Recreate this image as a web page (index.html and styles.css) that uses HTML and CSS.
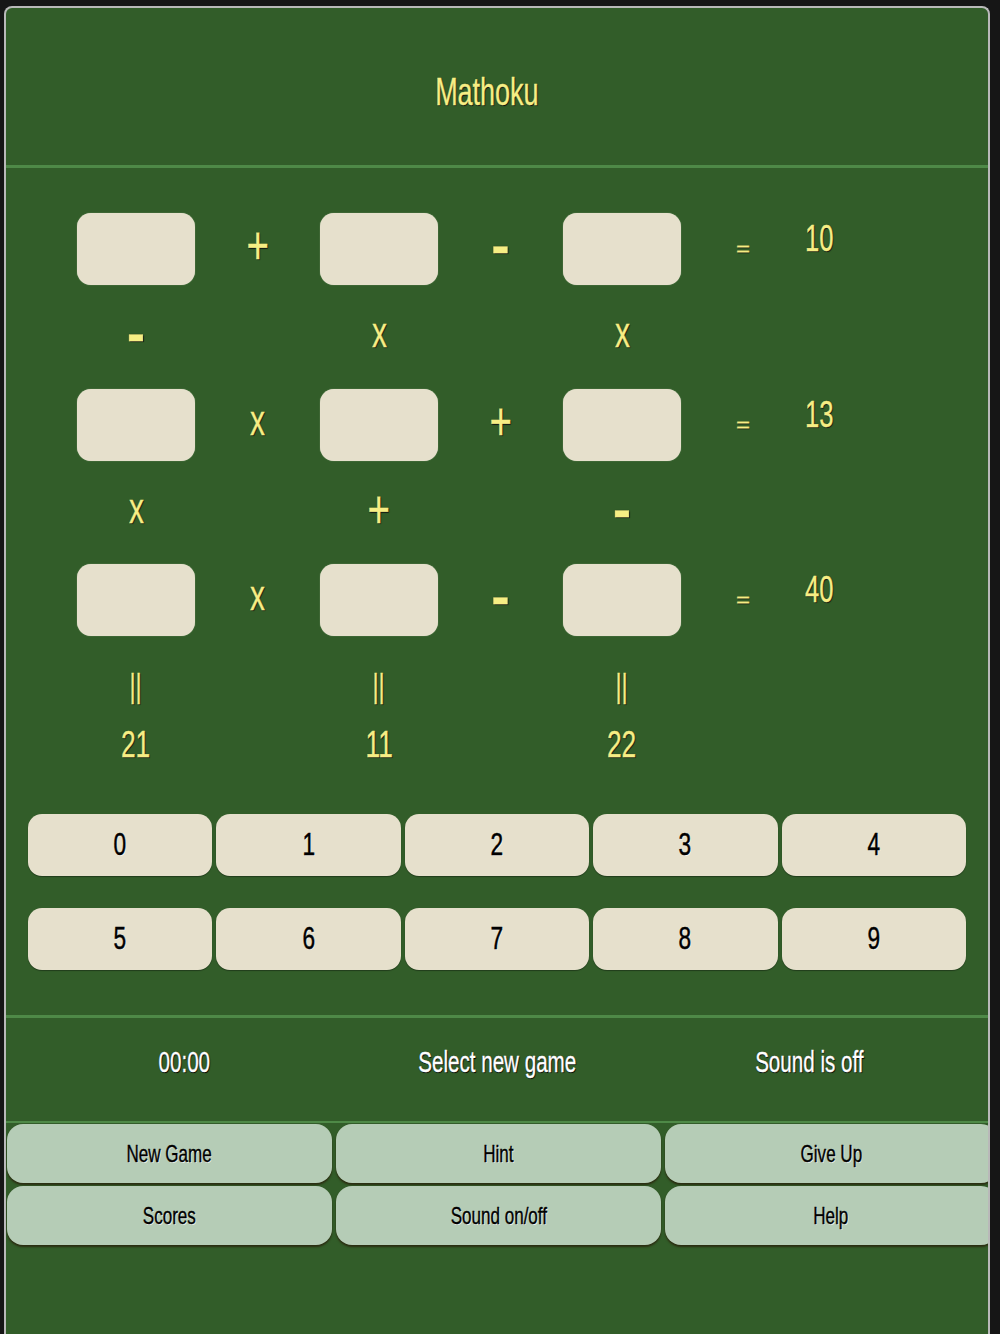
FILE: index.html
```html
<!DOCTYPE html>
<html lang="en">
<head>
<meta charset="utf-8">
<title>Mathoku</title>
<link rel="stylesheet" href="styles.css">
</head>
<body>
<div class="frame">
  <header class="header">
    <h1 class="title"><span class="sq">Mathoku</span></h1>
  </header>

  <div class="board">
    <div class="cell"></div><div class="op"><span class="sq plus">+</span></div><div class="cell"></div><div class="op"><span class="minus">-</span></div><div class="cell"></div><div class="eq"><span class="sq">=</span></div><div class="res"><span class="sq">10</span></div>

    <div class="op"><span class="minus">-</span></div><span></span><div class="op"><span class="sq times">x</span></div><span></span><div class="op"><span class="sq times">x</span></div><span></span><span></span>

    <div class="cell"></div><div class="op"><span class="sq times">x</span></div><div class="cell"></div><div class="op"><span class="sq plus">+</span></div><div class="cell"></div><div class="eq"><span class="sq">=</span></div><div class="res"><span class="sq">13</span></div>

    <div class="op"><span class="sq times">x</span></div><span></span><div class="op"><span class="sq plus">+</span></div><span></span><div class="op"><span class="minus">-</span></div><span></span><span></span>

    <div class="cell"></div><div class="op"><span class="sq times">x</span></div><div class="cell"></div><div class="op"><span class="minus">-</span></div><div class="cell"></div><div class="eq"><span class="sq">=</span></div><div class="res"><span class="sq">40</span></div>

    <div class="pipe"><span class="sq">||</span></div><span></span><div class="pipe"><span class="sq">||</span></div><span></span><div class="pipe"><span class="sq">||</span></div><span></span><span></span>

    <div class="total"><span class="sq">21</span></div><span></span><div class="total"><span class="sq">11</span></div><span></span><div class="total"><span class="sq">22</span></div><span></span><span></span>
  </div>

  <div class="pad">
    <button class="key"><span class="sq">0</span></button>
    <button class="key"><span class="sq">1</span></button>
    <button class="key"><span class="sq">2</span></button>
    <button class="key"><span class="sq">3</span></button>
    <button class="key"><span class="sq">4</span></button>
    <button class="key"><span class="sq">5</span></button>
    <button class="key"><span class="sq">6</span></button>
    <button class="key"><span class="sq">7</span></button>
    <button class="key"><span class="sq">8</span></button>
    <button class="key"><span class="sq">9</span></button>
  </div>

  <div class="status">
    <div class="stat"><span class="sq">00:00</span></div>
    <div class="stat"><span class="sq">Select new game</span></div>
    <div class="stat"><span class="sq">Sound is off</span></div>
  </div>

  <div class="actions">
    <button class="act"><span class="sq">New Game</span></button>
    <button class="act"><span class="sq">Hint</span></button>
    <button class="act"><span class="sq">Give Up</span></button>
    <button class="act"><span class="sq">Scores</span></button>
    <button class="act"><span class="sq">Sound on/off</span></button>
    <button class="act"><span class="sq">Help</span></button>
  </div>
</div>
</body>
</html>
```

FILE: styles.css
```css
html, body {
  margin: 0;
  padding: 0;
  background: #161616;
}

body {
  font-family: "Liberation Sans", Arial, sans-serif;
  height: 1334px;
  overflow: hidden;
}

.frame {
  box-sizing: border-box;
  margin: 6px 0 0 4px;
  width: 986px;
  height: 1328px;
  border: 2px solid #b9b9b9;
  border-bottom: none;
  border-radius: 8px 8px 0 0;
  background: #325d29;
  overflow: hidden;
}

.sq {
  display: inline-block;
  transform: scaleX(0.71);
  white-space: nowrap;
}

/* header */
.header {
  height: 160px;
  box-sizing: border-box;
  padding: 10px 20px 0 0;
  border-bottom: 3px solid #4e8947;
  display: flex;
  align-items: center;
  justify-content: center;
}

.title {
  margin: 0;
  font-weight: normal;
  font-size: 38px;
  line-height: 1;
  color: #f6ee84;
  -webkit-text-stroke: 0.4px #f6ee84;
  text-shadow: 1px 1px 1px #111, 0 0 1px #111;
}

/* puzzle board */
.board {
  margin: 45px 0 0 71px;
  display: grid;
  grid-template-columns: 118px 125px 118px 125px 118px 124px 120px;
  grid-template-rows: 72px 104px 72px 103px 72px 74px 74px;
  color: #f6ee84;
  -webkit-text-stroke: 0.4px #f6ee84;
  text-shadow: 1px 1px 1px #111, 0 0 1px #111;
}

.cell {
  background: #e6e0cc;
  border-radius: 14px;
  box-shadow: 0 0 1px rgba(255, 255, 240, 0.6);
}

.op, .eq, .res, .pipe, .total {
  display: flex;
  align-items: center;
  justify-content: center;
  line-height: 1;
}

.op {
  padding-bottom: 8px;
}

.plus { font-size: 54px; }
.times { font-size: 42px; }
.minus {
  display: inline-block;
  font-size: 54px;
  font-weight: bold;
}

.eq { font-size: 34px; }
.eq .sq { transform: scale(0.71, 0.6); }

.res {
  justify-content: flex-start;
  font-size: 36px;
  padding-bottom: 20px;
}
.res .sq { transform-origin: left center; }

.pipe {
  font-size: 33px;
  align-items: flex-end;
  padding-bottom: 8px;
}

.total {
  font-size: 37px;
  align-items: flex-start;
  padding-top: 16px;
}

/* number pad */
.pad {
  margin: 30px 22px 0;
  display: grid;
  grid-template-columns: repeat(5, 1fr);
  grid-auto-rows: 62px;
  column-gap: 4px;
  row-gap: 32px;
}

.key {
  border: none;
  margin: 0;
  padding: 0 0 3px;
  background: #e6e0cc;
  border-radius: 14px;
  box-shadow: 0 1px 1px rgba(0, 0, 0, 0.35);
  font-family: inherit;
  font-size: 32px;
  line-height: 1;
  color: #000;
  -webkit-text-stroke: 0.5px #000;
  text-shadow: 1px 1px 0 rgba(255, 255, 255, 0.7);
}

/* status */
.status {
  margin-top: 45px;
  border-top: 3px solid #4e8947;
  border-bottom: 2px solid #4e8947;
  height: 103px;
  box-sizing: content-box;
  padding: 0 22px 0;
  display: grid;
  grid-template-columns: repeat(3, 1fr);
}

.stat {
  display: flex;
  align-items: center;
  justify-content: center;
  padding-bottom: 14px;
  font-size: 29px;
  line-height: 1;
  color: #fff;
  -webkit-text-stroke: 0.4px #fff;
  text-shadow: 1px 1px 1px #000, 0 0 1px #000;
}

/* action buttons */
.actions {
  margin: 1px 0 0 1px;
  width: 990px;
  display: grid;
  grid-template-columns: 325px 325px 332px;
  grid-auto-rows: 59px;
  gap: 3px 4px;
}

.act {
  border: none;
  margin: 0;
  padding: 0;
  background: #b5ccb6;
  border-radius: 16px;
  box-shadow: 0 2px 2px rgba(40, 30, 10, 0.75);
  font-family: inherit;
  font-size: 24px;
  line-height: 1;
  color: #000;
  -webkit-text-stroke: 0.4px #000;
  text-shadow: 1px 1px 0 rgba(255, 255, 255, 0.75);
}
```
